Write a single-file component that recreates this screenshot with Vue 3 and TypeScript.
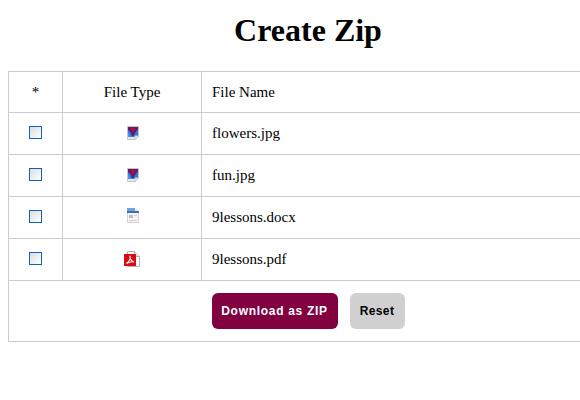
<script setup lang="ts">
interface FileRow { name: string; kind: 'image' | 'doc' | 'pdf' }
const files: FileRow[] = [
  { name: 'flowers.jpg', kind: 'image' },
  { name: 'fun.jpg', kind: 'image' },
  { name: '9lessons.docx', kind: 'doc' },
  { name: '9lessons.pdf', kind: 'pdf' },
]
</script>

<template>
  <div class="page">
    <h1 class="title">Create Zip</h1>
    <table class="files">
      <thead>
        <tr>
          <th class="c-check">*</th>
          <th class="c-type">File Type</th>
          <th class="c-name">File Name</th>
        </tr>
      </thead>
      <tbody>
        <tr v-for="f in files" :key="f.name">
          <td class="c-check"><span class="check" role="checkbox" aria-checked="false"></span></td>
          <td class="c-type">
            <svg v-if="f.kind === 'image'" class="icon" width="16" height="16" viewBox="0 0 16 16">
              <path d="M3.500 1.500H14.500V11L11 14.500H3.500Z" fill="#e8e8ee" stroke="#c4c4cc" />
              <rect x="4" y="2" width="10" height="10" fill="#2f7ae0" />
              <path d="M4 2H14V4L11 8L9.500 11H8L6.500 7L4 5Z" fill="#6a1660" />
              <path d="M7 3H11L9 8Z" fill="#b01040" />
              <path d="M4 7L7 12H4Z" fill="#3f9ae8" />
              <path d="M11 14.500V11H14.500Z" fill="#fff" stroke="#c4c4cc" />
            </svg>
            <svg v-else-if="f.kind === 'doc'" class="icon icon-doc" width="16" height="16" viewBox="0 0 16 16">
              <path d="M3.500 1.500H11L14.500 5V15.500H3.500Z" fill="#f4f4f4" stroke="#d4d4d4" />
              <rect x="3" y="1" width="8" height="3" fill="#6aa6dc" />
              <rect x="3" y="4" width="12" height="2" fill="#3e6fae" />
              <rect x="5" y="8" width="4" height="3" fill="#bdbdbd" />
              <rect x="10" y="8" width="3" height="1" fill="#d0d0d0" />
              <rect x="5" y="13" width="8" height="1" fill="#d0d0d0" />
            </svg>
            <svg v-else class="icon" width="16" height="16" viewBox="0 0 16 16">
              <path d="M3.500 0.500H10.500L15.500 5.500V15.500H3.500Z" fill="#fbfbfb" stroke="#b4b4b4" />
              <path d="M10.500 0.500V5.500H15.500" fill="#e8e8e8" stroke="#b4b4b4" />
              <rect x="0" y="3" width="12" height="12" fill="#dc0a14" />
              <path d="M2.500 12.500C5 10.500 6.500 7 6 5C5.500 7 7.500 10.500 10 11C8 10.500 5 11 2.500 12.500Z" fill="none" stroke="#fff" stroke-width="1.200" />
            </svg>
          </td>
          <td class="c-name">{{ f.name }}</td>
        </tr>
      </tbody>
      <tfoot>
        <tr>
          <td class="actions" colspan="3">
            <button class="btn primary" type="button">Download as ZIP</button>
            <button class="btn secondary" type="button">Reset</button>
          </td>
        </tr>
      </tfoot>
    </table>
  </div>
</template>

<style>
html, body { margin: 0; overflow: hidden; background: #fff; }
</style>

<style scoped>
.page {
  width: 600px;
  padding: 0 8px;
  font-family: "Liberation Serif", "Times New Roman", serif;
  color: #000;
}
.title {
  margin: 0;
  padding-top: 12px;
  height: 71px;
  box-sizing: border-box;
  font-size: 32px;
  line-height: 37px;
  font-weight: 700;
  text-align: center;
}
.files {
  width: 600px;
  table-layout: fixed;
  border-collapse: collapse;
  font-size: 15px;
}
.files th, .files td {
  border: 1px solid #ccc;
  font-weight: 400;
  padding: 0;
  height: 42px;
  box-sizing: border-box;
  vertical-align: middle;
}
.files th { height: 41px; }
.c-check { width: 54px; text-align: center; }
.c-type { width: 139px; text-align: center; }
.c-name { text-align: left; padding-left: 10px !important; }
.check {
  display: block;
  width: 13px;
  height: 13px;
  margin: -2px auto 0;
  border: 1px solid #0f62b4;
  background: linear-gradient(135deg, #dcdcdc, #fff);
  box-sizing: border-box;
}
.icon { display: block; margin: 0 auto 2px; }
.icon-doc { margin-bottom: 6px; }
.files .actions { height: 61px; text-align: center; }
.btn {
  height: 36px;
  border: none;
  border-radius: 6px;
  font-family: "Liberation Sans", Arial, sans-serif;
  font-size: 12px;
  font-weight: 700;
  letter-spacing: 0.700px;
  vertical-align: middle;
}
.primary { width: 126px; background: #800040; color: #fff; margin-right: 12px; }
.secondary { width: 55px; background: #d0d0d0; color: #000; letter-spacing: 0.400px; }
</style>
